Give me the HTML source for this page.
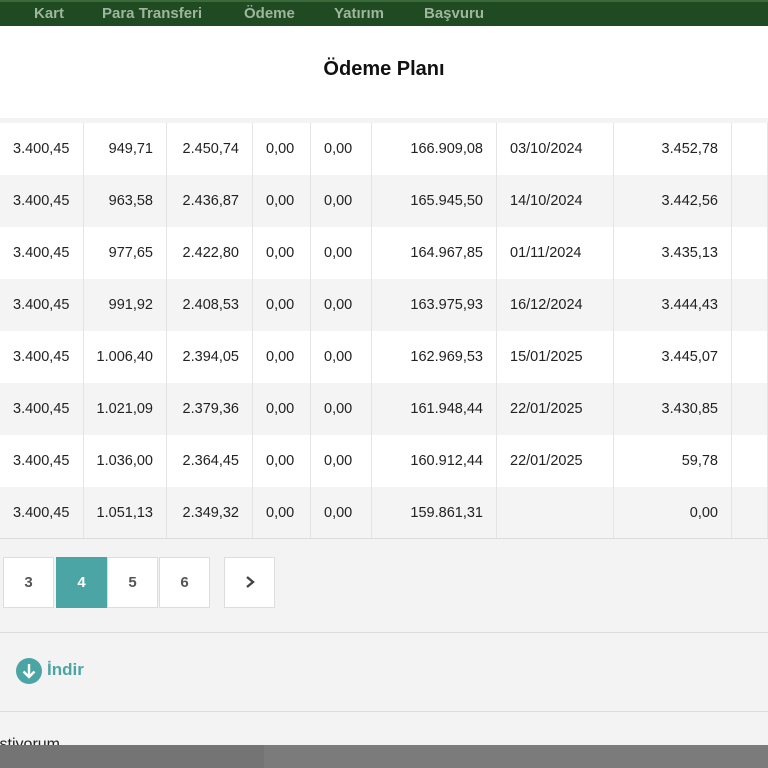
<!DOCTYPE html>
<html><head><meta charset="utf-8"><style>
*{margin:0;padding:0;box-sizing:border-box}
body{width:768px;height:768px;overflow:hidden;background:#f3f3f3;font-family:"Liberation Sans",sans-serif;position:relative}
.nav{position:absolute;top:0;left:0;width:768px;height:26px;background:#1f4a22;border-top:2px solid #3a6a3a}
.nav span{position:absolute;top:3px;color:#9fb59d;font-size:15px;font-weight:bold}
.head{position:absolute;top:26px;left:0;width:768px;height:92px;background:#fff}
.head h1{position:absolute;top:32px;width:100%;text-align:center;font-size:20px;font-weight:bold;color:#111}
.row{position:absolute;left:0;width:768px;height:52px;font-size:14.5px;color:#222}
.row div{position:absolute;top:0;height:52px;line-height:52px;border-right:1px solid #e4e4e4}
.pb{position:absolute;top:557px;width:51px;height:51px;background:#fff;border:1px solid #ddd;text-align:center;line-height:50px;font-size:15px;color:#555;font-weight:bold}
.line{position:absolute;left:0;width:768px;height:1px;background:#dcdcdc}
</style></head><body>
<div class="nav"><span style="left:34px">Kart</span><span style="left:102px">Para Transferi</span><span style="left:244px">Ödeme</span><span style="left:334px">Yatırım</span><span style="left:424px">Başvuru</span></div>
<div class="head"><h1>Ödeme Planı</h1></div>
<div id="t"></div>
<div class="line" style="top:538px"></div>
<div class="pb" style="left:3px">3</div>
<div class="pb" style="left:56px;background:#4ba5a4;border-color:#4ba5a4;color:#fff">4</div>
<div class="pb" style="left:107px">5</div>
<div class="pb" style="left:159px">6</div>
<div class="pb" style="left:224px"><svg width="14" height="14" viewBox="0 0 14 14" style="vertical-align:-2px"><path d="M4 2l6 5-6 5" stroke="#444" stroke-width="2.4" fill="none"/></svg></div>
<div class="line" style="top:632px"></div>
<svg style="position:absolute;left:16px;top:658px" width="26" height="26" viewBox="0 0 26 26"><circle cx="13" cy="13" r="13" fill="#4ba5a4"/><path d="M13 6v13M7.5 13.5l5.5 5.5 5.5-5.5" stroke="#fff" stroke-width="2.4" fill="none"/></svg>
<div style="position:absolute;left:47px;top:660px;font-size:17px;font-weight:bold;color:#4ba5a4">İndir</div>
<div class="line" style="top:711px"></div>
<div style="position:absolute;top:745px;left:0;width:768px;height:23px;background:#747474"></div>
<div style="position:absolute;top:745px;left:264px;width:504px;height:23px;background:#7b7b7b"></div>
<div style="position:absolute;top:732px;left:-4px;font-size:16px;color:#222;height:13px;overflow:hidden;line-height:26px">istiyorum.</div>
<script>
var d=[["3.400,45","949,71","2.450,74","166.909,08","03/10/2024","3.452,78"],["3.400,45","963,58","2.436,87","165.945,50","14/10/2024","3.442,56"],["3.400,45","977,65","2.422,80","164.967,85","01/11/2024","3.435,13"],["3.400,45","991,92","2.408,53","163.975,93","16/12/2024","3.444,43"],["3.400,45","1.006,40","2.394,05","162.969,53","15/01/2025","3.445,07"],["3.400,45","1.021,09","2.379,36","161.948,44","22/01/2025","3.430,85"],["3.400,45","1.036,00","2.364,45","160.912,44","22/01/2025","59,78"],["3.400,45","1.051,13","2.349,32","159.861,31","","0,00"]];
var c=[[0,84],[84,167],[167,253],[253,311],[311,372],[372,497],[497,614],[614,732],[732,768]];
var h="";
d.forEach(function(r,i){var v=[r[0],r[1],r[2],"0,00","0,00",r[3],r[4],r[5],""];
h+='<div class="row" style="top:'+(123+i*52)+'px;background:'+(i%2?'#f4f4f4':'#fff')+'">';
v.forEach(function(t,j){var s=c[j][0],w=c[j][1]-s;var al=(j==3||j==4)?'left;padding-left:13px':(j==6?'left;padding-left:13px':'right;padding-right:13px');if(j==0)al='left;padding-left:13px';
h+='<div style="left:'+s+'px;width:'+w+'px;text-align:'+al+'">'+t+'</div>';});h+='</div>';});
document.getElementById('t').innerHTML=h;
</script>
</body></html>
